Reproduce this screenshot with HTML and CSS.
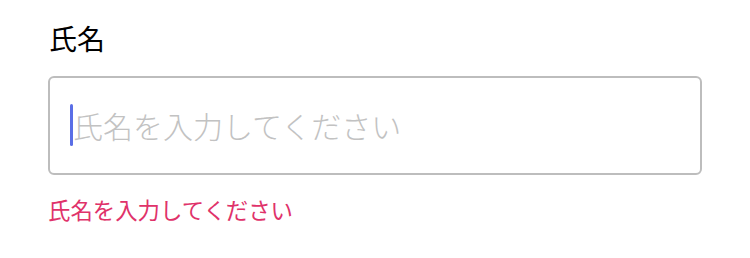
FILE: index.html
```html
<!DOCTYPE html>
<html lang="ja">
<head>
<meta charset="utf-8">
<link rel="stylesheet" href="styles.css">
</head>
<body>
<div class="field">
  <label class="label">氏名</label>
  <div class="input">
    <span class="caret"></span>
    <span class="placeholder">氏名を入力してください</span>
  </div>
  <p class="error">氏名を入力してください</p>
</div>
</body>
</html>
```
FILE: styles.css
```css
html, body {
  margin: 0;
  padding: 0;
  background: #ffffff;
}
body {
  font-family: "Noto Sans CJK JP", "Noto Sans", sans-serif;
}
.field {
  padding: 18px 48px 0 48px;
  display: flex;
  flex-direction: column;
}
.label {
  display: block;
  font-size: 28px;
  line-height: 40px;
  height: 40px;
  color: #000;
  padding-left: 1px;
}
.input {
  margin-top: 18px;
  width: 654px;
  height: 99px;
  box-sizing: border-box;
  border: 2px solid #bdbdbd;
  border-radius: 6px;
  padding-left: 20px;
  display: flex;
  align-items: center;
}
.caret {
  width: 3px;
  height: 42px;
  background: #5a6ee6;
  border-radius: 2px;
  flex: none;
  margin-top: -2px;
}
.placeholder {
  font-size: 30px;
  font-weight: 300;
  line-height: 40px;
  color: #c2c2c2;
  margin-top: -1px;
}
.error {
  margin: 19px 0 0 0;
  font-size: 22.4px;
  line-height: 30px;
  color: #e0326a;
}
```
